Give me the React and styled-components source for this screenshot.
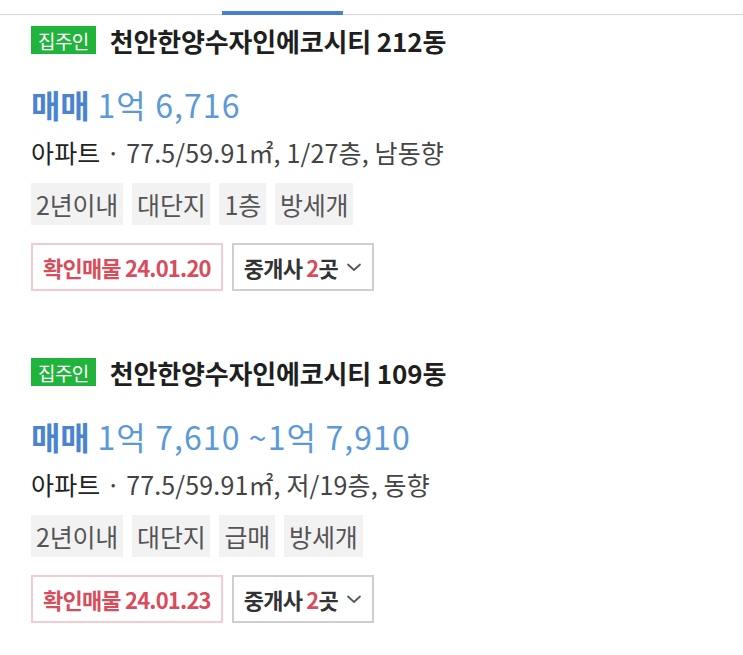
import React from 'react';
import styled, { createGlobalStyle } from 'styled-components';

const GlobalStyle = createGlobalStyle`
  html, body {
    margin: 0;
    padding: 0;
    background: #fff;
  }
  body {
    font-family: "Noto Sans CJK KR", "Noto Sans", sans-serif;
    color: #222;
  }
`;

const Page = styled.div`
  width: 743px;
  height: 655px;
  overflow: hidden;
  background: #fff;
`;

const TabBar = styled.div`
  display: flex;
  height: 14px;
  border-bottom: 1px solid #d3d6db;
`;

const Tab = styled.div`
  flex: ${(p) => (p.$grow ? 1 : 'none')};
  width: ${(p) => p.$width}px;
  position: relative;
  &::after {
    content: '';
    display: ${(p) => (p.$active ? 'block' : 'none')};
    position: absolute;
    left: 0;
    right: 0;
    bottom: -1px;
    height: 4px;
    background: #4a7fcf;
  }
`;

const List = styled.div`
  display: flex;
  flex-direction: column;
  padding: 10px 0 0 31px;
  gap: 66px;
`;

const Item = styled.div`
  display: flex;
  flex-direction: column;
`;

const TitleRow = styled.div`
  display: flex;
  align-items: center;
  gap: 14px;
  height: 30px;
`;

const OwnerBadge = styled.span`
  display: inline-flex;
  align-items: center;
  justify-content: center;
  height: 28px;
  padding: 0 7px;
  background: #21b43d;
  color: #fff;
  font-size: 19px;
  letter-spacing: -0.6px;
`;

const Title = styled.h2`
  margin: 0;
  font-size: 26px;
  font-weight: 700;
  color: #1f1f1f;
  letter-spacing: -0.15px;
`;

const Price = styled.div`
  margin-top: 29px;
  font-size: 32px;
  line-height: 40px;
  color: #5b99d8;
  letter-spacing: 1.1px;
  strong {
    font-weight: 700;
    color: #4a84cf;
    letter-spacing: -0.2px;
    margin-right: 8px;
  }
`;

const Detail = styled.div`
  margin-top: 12px;
  font-size: 25px;
  line-height: 32px;
  color: #444;
  letter-spacing: 0.15px;
  b {
    font-weight: 400;
    color: #222;
  }
`;

const Tags = styled.div`
  display: flex;
  gap: 9px;
  margin-top: 15px;
`;

const Tag = styled.span`
  display: inline-flex;
  align-items: center;
  height: 42px;
  padding: 0 5px;
  background: #f2f2f2;
  color: #555;
  font-size: 25px;
  letter-spacing: -0.2px;
`;

const Actions = styled.div`
  display: flex;
  gap: 9px;
  margin-top: 18px;
`;

const ActionBox = styled.div`
  display: inline-flex;
  align-items: center;
  gap: 8px;
  height: 44px;
  padding: 0 10px;
  border: 2px solid ${(p) => (p.$tone === 'red' ? '#f4cbd0' : '#cfcfcf')};
  color: ${(p) => (p.$tone === 'red' ? '#d84c5b' : '#333')};
  font-size: 22px;
  font-weight: 700;
  letter-spacing: -0.8px;
  em {
    font-style: normal;
    color: #d84c5b;
  }
`;

const Chevron = () => (
  <svg width="16" height="12" viewBox="0 0 16 12" fill="none">
    <path d="M2 3.5 L8 9 L14 3.5" stroke="#555" strokeWidth="1.7" strokeLinecap="round" strokeLinejoin="round" />
  </svg>
);

const listings = [
  {
    title: '천안한양수자인에코시티 212동',
    price: '1억 6,716',
    detail: '77.5/59.91㎡, 1/27층, 남동향',
    tags: ['2년이내', '대단지', '1층', '방세개'],
    date: '24.01.20',
  },
  {
    title: '천안한양수자인에코시티 109동',
    price: '1억 7,610 ~1억 7,910',
    detail: '77.5/59.91㎡, 저/19층, 동향',
    tags: ['2년이내', '대단지', '급매', '방세개'],
    date: '24.01.23',
  },
];

export default function App() {
  return (
    <Page>
      <GlobalStyle />
      <TabBar>
        <Tab $width={222} />
        <Tab $width={121} $active />
        <Tab $grow />
      </TabBar>
      <List>
        {listings.map((l) => (
          <Item key={l.title}>
            <TitleRow>
              <OwnerBadge>집주인</OwnerBadge>
              <Title>{l.title}</Title>
            </TitleRow>
            <Price>
              <strong>매매</strong>
              {l.price}
            </Price>
            <Detail>
              <b>아파트</b> · {l.detail}
            </Detail>
            <Tags>
              {l.tags.map((t) => (
                <Tag key={t}>{t}</Tag>
              ))}
            </Tags>
            <Actions>
              <ActionBox $tone="red">확인매물 {l.date}</ActionBox>
              <ActionBox>
                <span>
                  중개사 <em>2</em>곳
                </span>
                <Chevron />
              </ActionBox>
            </Actions>
          </Item>
        ))}
      </List>
    </Page>
  );
}
